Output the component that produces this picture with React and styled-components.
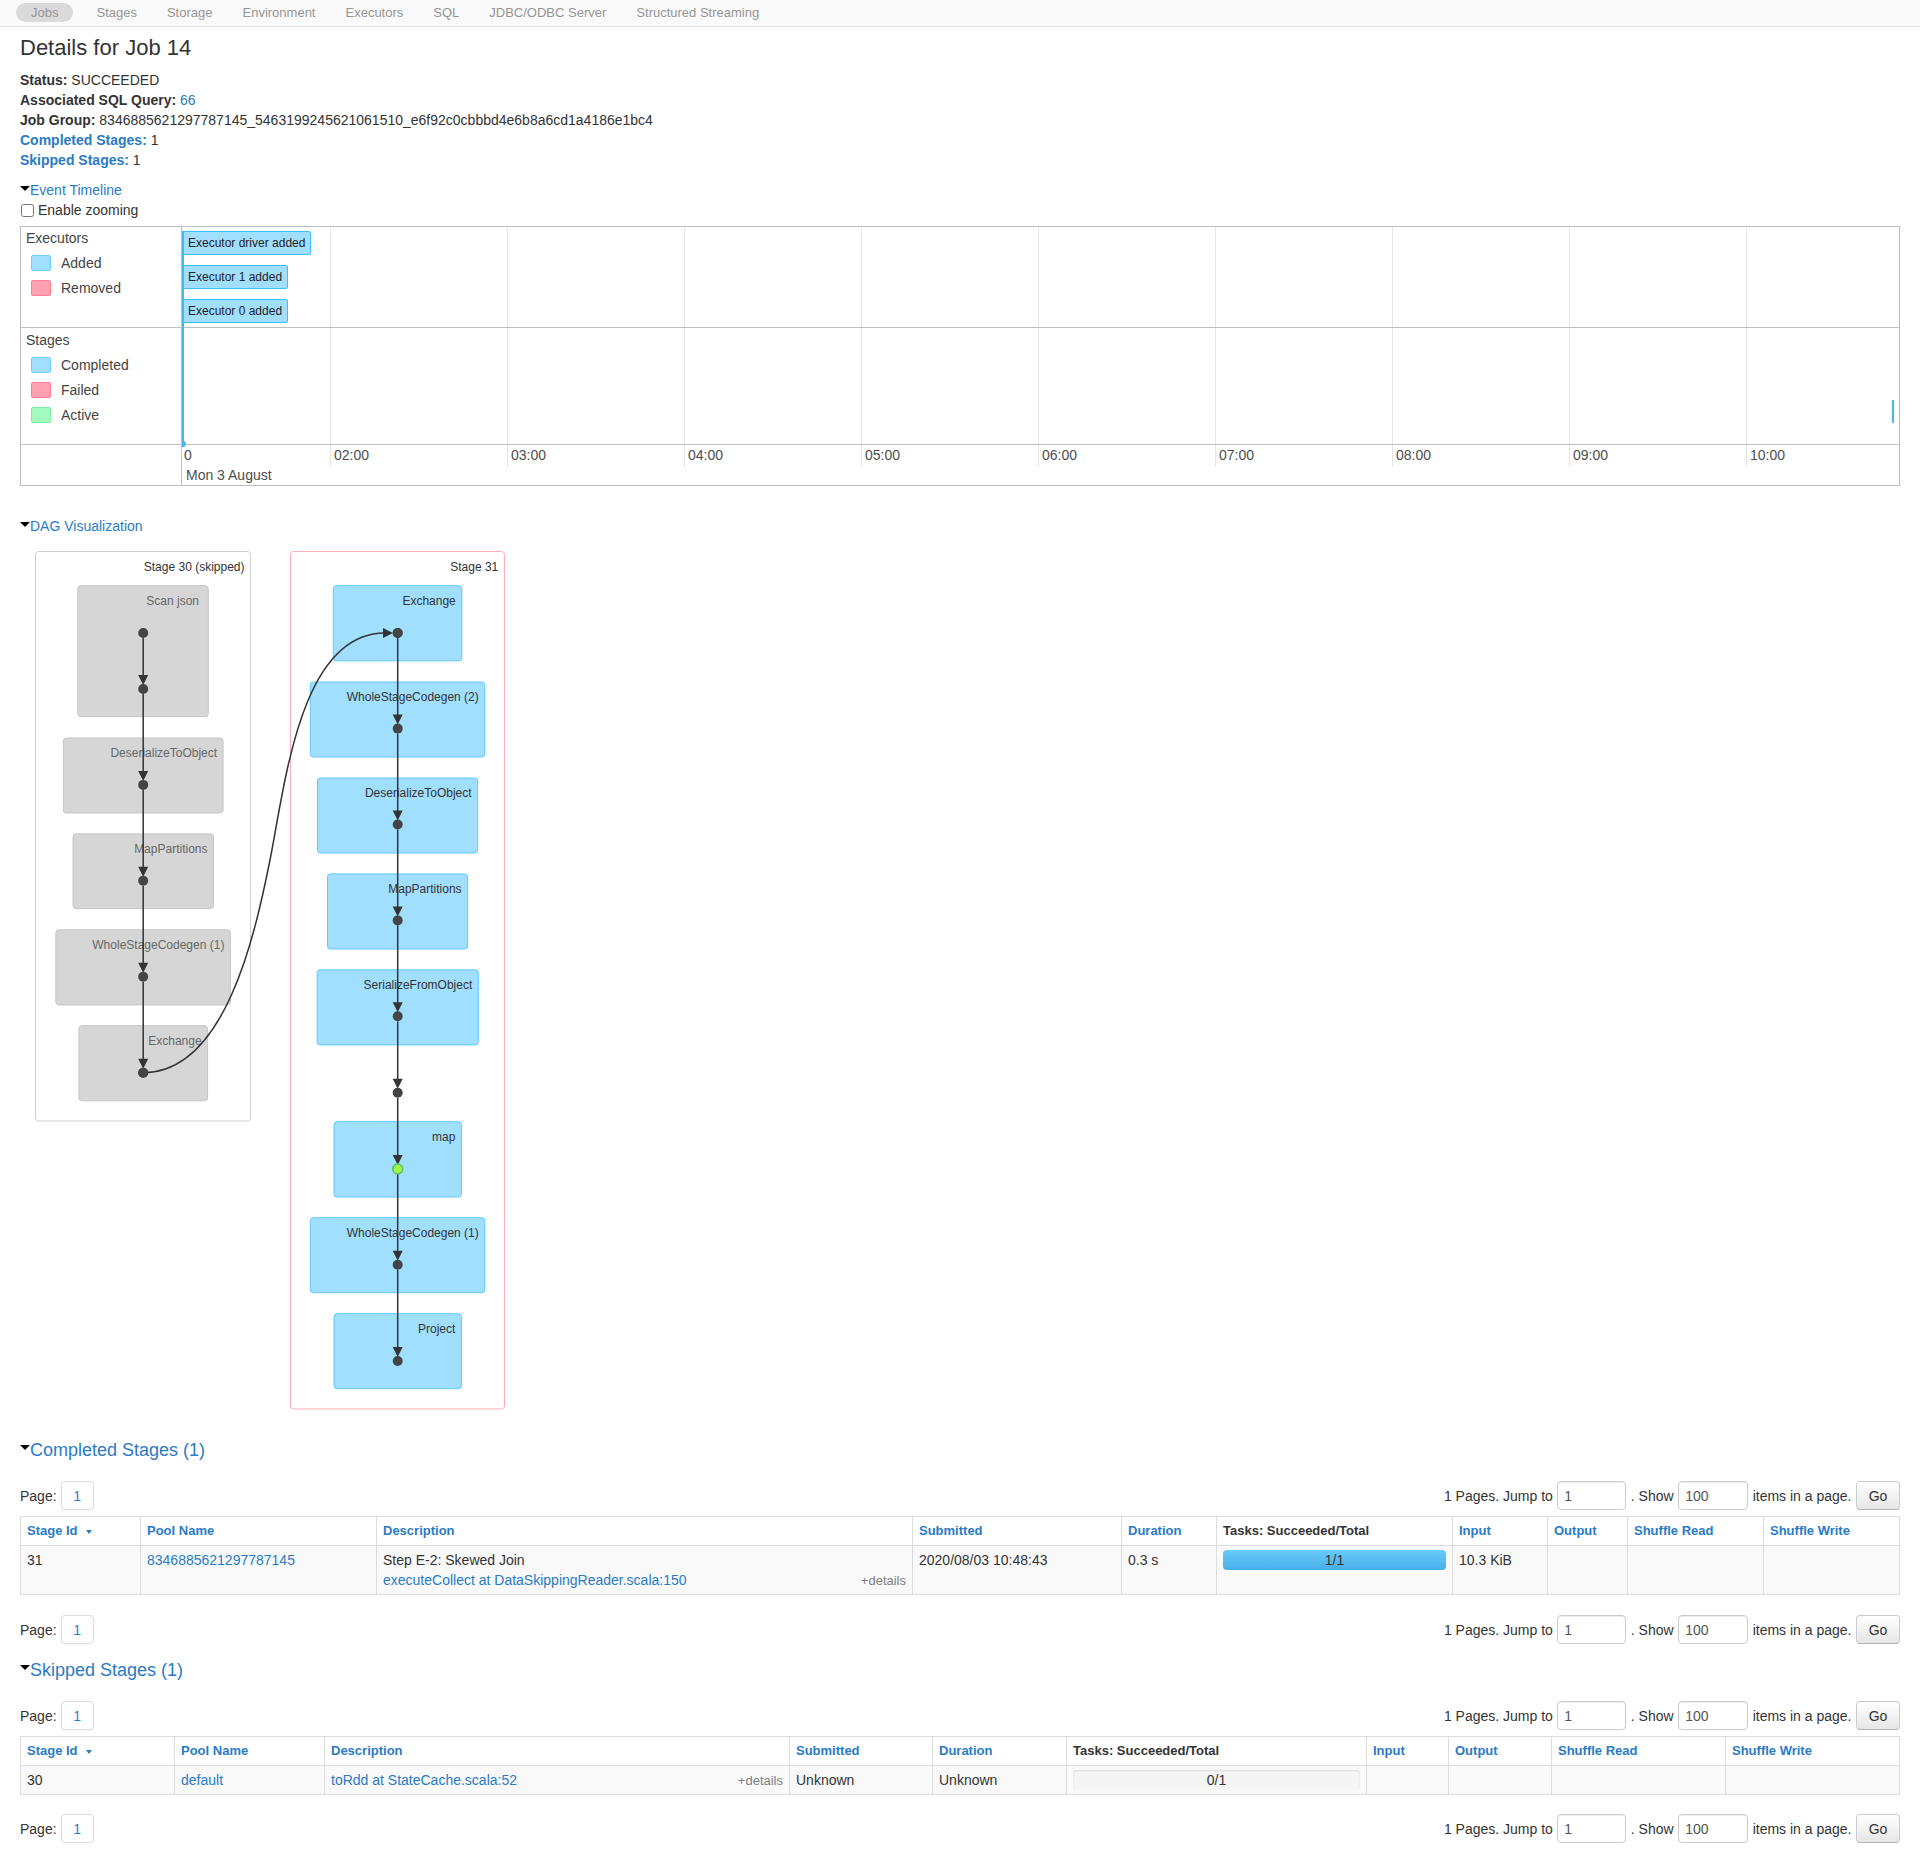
import React from 'react';
import styled, { createGlobalStyle } from 'styled-components';

const LINK = '#2a7bc6';
const TEXT = '#333';

const GlobalStyle = createGlobalStyle`
  html, body { margin: 0; padding: 0; background: #fff; }
  body {
    font-family: "Liberation Sans", Arial, Helvetica, sans-serif;
    font-size: 14px;
    line-height: 20px;
    color: ${TEXT};
  }
  * { box-sizing: border-box; }
`;

/* ---------- nav ---------- */
const NavBar = styled.nav`
  height: 27px;
  border-bottom: 1px solid #e5e5e5;
  background: #fafafa;
  display: flex;
  align-items: center;
  padding-left: 16px;
`;
const NavItem = styled.a`
  font-size: 13px;
  color: #959595;
  height: 19px;
  line-height: 19px;
  margin-bottom: 2px;
  padding: 0 15px;
  border-radius: 10px;
  background: ${p => (p.$active ? '#dadada' : 'transparent')};
  margin-right: ${p => (p.$active ? '8px' : '0')};
  white-space: nowrap;
`;

/* ---------- page ---------- */
const Content = styled.main`
  padding: 0 20px;
`;
const Title = styled.h3`
  margin: 6px 0 0;
  font-size: 22px;
  font-weight: normal;
  line-height: 30px;
  color: ${TEXT};
`;
const Summary = styled.ul`
  list-style: none;
  margin: 7px 0 0;
  padding: 0;
  li { line-height: 20px; }
`;
const Strong = styled.strong`
  font-weight: bold;
  color: ${p => (p.$link ? LINK : TEXT)};
`;
const Link = styled.a`
  color: ${LINK};
  text-decoration: none;
`;
const Toggle = styled.div`
  display: flex;
  align-items: center;
  color: ${LINK};
  font-size: ${p => p.$size}px;
  line-height: ${p => p.$lh}px;
  margin-top: ${p => p.$mt}px;
`;
const Caret = styled.span`
  display: inline-block;
  width: 0;
  height: 0;
  border-left: 5px solid transparent;
  border-right: 5px solid transparent;
  border-top: 5px solid #000;
  margin-bottom: ${p => p.$mb}px;
`;
const CheckRow = styled.label`
  display: flex;
  align-items: center;
  line-height: 20px;
  input { margin: 0 4px 0 1px; width: 13px; height: 13px; }
`;

/* ---------- timeline ---------- */
const Timeline = styled.div`
  margin-top: 6px;
  border: 1px solid #bfbfbf;
  display: grid;
  grid-template-columns: 161px 1fr;
`;
const LegendCol = styled.div`
  border-right: 1px solid #bfbfbf;
  display: flex;
  flex-direction: column;
`;
const LegendGroup = styled.div`
  height: ${p => p.$h}px;
  border-bottom: ${p => (p.$border ? '1px solid #bfbfbf' : 'none')};
  padding: ${p => p.$pt}px 0 0 5px;
  color: #444;
`;
const LegendTitle = styled.div`
  line-height: 20px;
  margin-bottom: 2px;
`;
const LegendItem = styled.div`
  display: flex;
  align-items: center;
  height: 25px;
`;
const Swatch = styled.span`
  width: 20px;
  height: 16px;
  margin: 0 10px 0 5px;
  border-radius: 2px;
  border: 1px solid ${p => p.$stroke};
  background: ${p => p.$fill};
`;
const Chart = styled.div`
  position: relative;
  display: flex;
  flex-direction: column;
  overflow: hidden;
`;
const Band = styled.div`
  position: relative;
  z-index: 1;
  height: ${p => p.$h}px;
  border-bottom: ${p => (p.$border ? '1px solid #bfbfbf' : 'none')};
`;
const GridLine = styled.div`
  position: absolute;
  top: 0;
  width: 1px;
  height: 240px;
  background: #e5e5e5;
`;
const AxisLabel = styled.div`
  position: absolute;
  font-size: 14px;
  line-height: 18px;
  color: #4d4d4d;
  white-space: nowrap;
`;
const EventItem = styled.div`
  position: absolute;
  z-index: 2;
  left: 0;
  height: 24px;
  padding: 0 5px;
  font-size: 12px;
  line-height: 22px;
  color: #222;
  white-space: nowrap;
  background: #a0dfff;
  border: 1px solid #3ec0ff;
  border-radius: 2px;
`;
const Bar = styled.div`
  position: absolute;
  z-index: 3;
  width: 2px;
  background: #46b8ee;
`;
const BarDot = styled.div`
  position: absolute;
  z-index: 3;
  width: 6px;
  height: 6px;
  border-radius: 50%;
  background: #46b8ee;
`;

/* ---------- dag ---------- */
const DagSvg = styled.svg`
  display: block;
  margin-top: 4px;
  font-family: "Liberation Sans", Arial, Helvetica, sans-serif;
  font-size: 12px;
`;

/* ---------- sections / tables ---------- */
const SectionTitle = styled(Toggle)``;
const PageRow = styled.div`
  display: flex;
  justify-content: space-between;
  align-items: center;
  height: 29px;
  margin-top: ${p => p.$mt}px;
`;
const PageLeft = styled.div`
  display: flex;
  align-items: center;
  gap: 4px;
`;
const PageBox = styled.span`
  display: inline-flex;
  align-items: center;
  justify-content: center;
  width: 33px;
  height: 29px;
  border: 1px solid #ddd;
  border-radius: 4px;
  color: ${LINK};
  box-shadow: 0 1px 2px rgba(0, 0, 0, 0.05);
`;
const PageRight = styled.div`
  display: flex;
  align-items: center;
  gap: 4.5px;
  white-space: nowrap;
`;
const PageInput = styled.input`
  width: ${p => p.$w}px;
  height: 29px;
  padding: 0 6px;
  border: 1px solid #ccc;
  border-radius: 4px;
  font: 14px "Liberation Sans", Arial, sans-serif;
  color: #555;
  box-shadow: inset 0 1px 1px rgba(0, 0, 0, 0.075);
`;
const GoButton = styled.button`
  width: 44px;
  height: 29px;
  border: 1px solid #ccc;
  border-bottom-color: #b3b3b3;
  border-radius: 4px;
  background: linear-gradient(#ffffff, #e6e6e6);
  font: 14px "Liberation Sans", Arial, sans-serif;
  color: #333;
  padding: 0;
`;
const Table = styled.table`
  width: 100%;
  margin-top: 6px;
  border-collapse: collapse;
  table-layout: fixed;
  border: 1px solid #ddd;
`;
const Col = styled.col`
  width: ${p => p.$w}px;
`;
const Th = styled.th`
  text-align: left;
  font-size: 13px;
  font-weight: bold;
  padding: 4px 6px;
  line-height: 20px;
  border: 1px solid #ddd;
  color: ${p => (p.$plain ? TEXT : LINK)};
  background: #fff;
  white-space: nowrap;
`;
const Td = styled.td`
  vertical-align: top;
  padding: 4px 6px 3px;
  line-height: 20px;
  border: 1px solid #ddd;
  background: #f9f9f9;
  white-space: nowrap;
`;
const SortArrow = styled.span`
  display: inline-block;
  width: 0;
  height: 0;
  margin-left: 8px;
  vertical-align: middle;
  border-left: 3px solid transparent;
  border-right: 3px solid transparent;
  border-top: 4px solid ${LINK};
`;
const DescLine = styled.div`
  display: flex;
  justify-content: space-between;
  align-items: baseline;
`;
const Details = styled.span`
  font-size: 13px;
  color: #808080;
`;
const Progress = styled.div`
  position: relative;
  height: 20px;
  border-radius: 4px;
  background: #f5f5f5;
  box-shadow: inset 0 1px 2px rgba(0, 0, 0, 0.1);
  overflow: hidden;
`;
const ProgressFill = styled.div`
  position: absolute;
  left: 0;
  top: 0;
  bottom: 0;
  background: linear-gradient(#6acbfa, #48aee9);
`;
const ProgressText = styled.span`
  position: relative;
  display: block;
  text-align: center;
  line-height: 20px;
  color: #333;
`;

/* ---------- data ---------- */
const navItems = ['Jobs', 'Stages', 'Storage', 'Environment', 'Executors', 'SQL', 'JDBC/ODBC Server', 'Structured Streaming'];
const ticks = ['02:00', '03:00', '04:00', '05:00', '06:00', '07:00', '08:00', '09:00', '10:00'];
const executorEvents = [
  { label: 'Executor driver added', top: 4 },
  { label: 'Executor 1 added', top: 38 },
  { label: 'Executor 0 added', top: 72 },
];

const stage30 = {
  nodes: [
    { label: 'Scan json', x1: 77.8, x2: 208.3, y1: 585.7, y2: 716.7, lx: 199 },
    { label: 'DeserializeToObject', x1: 63.4, x2: 223.1, y1: 738, y2: 813 },
    { label: 'MapPartitions', x1: 73, x2: 213.5, y1: 833.9, y2: 908.6 },
    { label: 'WholeStageCodegen (1)', x1: 55.8, x2: 230.4, y1: 929.8, y2: 1004.9 },
    { label: 'Exchange', x1: 78.9, x2: 207.6, y1: 1025.7, y2: 1100.8 },
  ],
  cx: 143.2,
  dots: [633, 689, 784.9, 880.8, 976.7, 1072.7],
};
const stage31 = {
  nodes: [
    { label: 'Exchange', x1: 333.3, x2: 461.8, y1: 585.7, y2: 660.8 },
    { label: 'WholeStageCodegen (2)', x1: 310.3, x2: 484.8, y1: 682, y2: 757 },
    { label: 'DeserializeToObject', x1: 317.5, x2: 477.6, y1: 778, y2: 853 },
    { label: 'MapPartitions', x1: 327.5, x2: 467.6, y1: 873.9, y2: 949 },
    { label: 'SerializeFromObject', x1: 317.1, x2: 478.3, y1: 969.8, y2: 1044.9 },
    { label: 'map', x1: 334, x2: 461.4, y1: 1121.7, y2: 1197 },
    { label: 'WholeStageCodegen (1)', x1: 310.3, x2: 484.8, y1: 1217.7, y2: 1292.7 },
    { label: 'Project', x1: 334, x2: 461.4, y1: 1313.7, y2: 1388.7 },
  ],
  cx: 397.7,
  dots: [633, 728.6, 824.5, 920.4, 1016.3, 1092.7, 1169, 1264.7, 1361],
  cached: 1169,
};

const completedCols = [
  { title: 'Stage Id', w: 120, sort: true },
  { title: 'Pool Name', w: 236 },
  { title: 'Description', w: 536 },
  { title: 'Submitted', w: 209 },
  { title: 'Duration', w: 95 },
  { title: 'Tasks: Succeeded/Total', w: 236, plain: true },
  { title: 'Input', w: 95 },
  { title: 'Output', w: 80 },
  { title: 'Shuffle Read', w: 136 },
  { title: 'Shuffle Write', w: 136 },
];
const skippedCols = [
  { title: 'Stage Id', w: 154, sort: true },
  { title: 'Pool Name', w: 150 },
  { title: 'Description', w: 465 },
  { title: 'Submitted', w: 143 },
  { title: 'Duration', w: 134 },
  { title: 'Tasks: Succeeded/Total', w: 300, plain: true },
  { title: 'Input', w: 82 },
  { title: 'Output', w: 103 },
  { title: 'Shuffle Read', w: 174 },
  { title: 'Shuffle Write', w: 174 },
];

/* ---------- components ---------- */
function StageCluster({ stage, skipped }) {
  const { nodes, cx, dots, cached } = stage;
  const fill = skipped ? '#d6d6d6' : '#a0dfff';
  const stroke = skipped ? '#c6c6c6' : '#62c9ff';
  const textColor = skipped ? '#666' : '#333';
  return (
    <g>
      {nodes.map(n => (
        <g key={n.label + n.y1}>
          <rect x={n.x1} y={n.y1} width={n.x2 - n.x1} height={n.y2 - n.y1} rx="3" fill={fill} stroke={stroke} strokeWidth="1" />
          <text x={n.lx || n.x2 - 6} y={n.y1 + 19} textAnchor="end" fill={textColor}>{n.label}</text>
        </g>
      ))}
      {dots.slice(1).map((y, i) => (
        <g key={'e' + y}>
          <line x1={cx} y1={dots[i] + 5} x2={cx} y2={y - 12} stroke="#333" strokeWidth="1.5" />
          <polygon points={`${cx - 5},${y - 14} ${cx + 5},${y - 14} ${cx},${y - 4}`} fill="#333" />
        </g>
      ))}
      {dots.map(y => (
        y === cached
          ? <circle key={'d' + y} cx={cx} cy={y} r="5" fill="#a3f545" stroke="#52c366" strokeWidth="1.5" />
          : <circle key={'d' + y} cx={cx} cy={y} r="5" fill="#444" />
      ))}
    </g>
  );
}

function DagViz() {
  return (
    <DagSvg width="500" height="880" viewBox="20 540 500 880">
      <rect x="35.5" y="551.5" width="215" height="569.5" rx="3" fill="#fff" stroke="#cfcfcf" />
      <text x="244.5" y="570.8" textAnchor="end" fill="#333">Stage 30 (skipped)</text>
      <rect x="290.5" y="551.5" width="214" height="857.5" rx="3" fill="#fff" stroke="#ffabba" />
      <text x="498.3" y="570.8" textAnchor="end" fill="#333">Stage 31</text>
      <StageCluster stage={stage30} skipped />
      <StageCluster stage={stage31} />
      <path d="M143.2,1072.7 C225,1072.7 255,935 270,860 C285,785 300,633 385,633" fill="none" stroke="#333" strokeWidth="1.5" />
      <polygon points="383,628 383,638 393,633" fill="#333" />
      <circle cx="143.2" cy="1072.7" r="5" fill="#444" />
      <circle cx="397.7" cy="633" r="5" fill="#444" />
    </DagSvg>
  );
}

function EventTimeline() {
  return (
    <Timeline>
      <LegendCol>
        <LegendGroup $h={101} $pt={1} $border>
          <LegendTitle>Executors</LegendTitle>
          <LegendItem><Swatch $fill="#a0dfff" $stroke="#6ccfff" />Added</LegendItem>
          <LegendItem><Swatch $fill="#ffa1b0" $stroke="#ff7d92" />Removed</LegendItem>
        </LegendGroup>
        <LegendGroup $h={117} $pt={2} $border>
          <LegendTitle>Stages</LegendTitle>
          <LegendItem><Swatch $fill="#a0dfff" $stroke="#6ccfff" />Completed</LegendItem>
          <LegendItem><Swatch $fill="#ffa1b0" $stroke="#ff7d92" />Failed</LegendItem>
          <LegendItem><Swatch $fill="#a2fcc0" $stroke="#7eeaa0" />Active</LegendItem>
        </LegendGroup>
        <LegendGroup $h={40} $pt={0} />
      </LegendCol>
      <Chart>
        <Band $h={101} $border />
        <Band $h={117} $border />
        <Band $h={40} />
        {ticks.map((t, i) => (
          <React.Fragment key={t}>
            <GridLine style={{ left: 148 + 177 * i }} />
            <AxisLabel style={{ left: 152 + 177 * i, top: 219 }}>{t}</AxisLabel>
          </React.Fragment>
        ))}
        <AxisLabel style={{ left: 2, top: 219 }}>0</AxisLabel>
        <AxisLabel style={{ left: 4, top: 239 }}>Mon 3 August</AxisLabel>
        {executorEvents.map(e => (
          <EventItem key={e.label} style={{ top: e.top }}>{e.label}</EventItem>
        ))}
        <Bar style={{ left: 0, top: 4, height: 215 }} />
        <BarDot style={{ left: -2, top: 214 }} />
        <Bar style={{ left: 1710, top: 173, height: 23 }} />
      </Chart>
    </Timeline>
  );
}

function Pagination({ mt }) {
  return (
    <PageRow $mt={mt}>
      <PageLeft>Page: <PageBox>1</PageBox></PageLeft>
      <PageRight>
        <span>1 Pages. Jump to</span>
        <PageInput $w={69} defaultValue="1" />
        <span>. Show</span>
        <PageInput $w={70} defaultValue="100" />
        <span>items in a page.</span>
        <GoButton>Go</GoButton>
      </PageRight>
    </PageRow>
  );
}

function StageTable({ cols, children }) {
  return (
    <Table>
      <colgroup>
        {cols.map(c => <Col key={c.title} $w={c.w} />)}
      </colgroup>
      <thead>
        <tr>
          {cols.map(c => (
            <Th key={c.title} $plain={c.plain}>
              {c.title}
              {c.sort && <SortArrow />}
            </Th>
          ))}
        </tr>
      </thead>
      <tbody>{children}</tbody>
    </Table>
  );
}

function TaskBar({ done, total }) {
  return (
    <Progress>
      <ProgressFill style={{ width: `${(done / total) * 100}%` }} />
      <ProgressText>{done}/{total}</ProgressText>
    </Progress>
  );
}

export default function App() {
  return (
    <>
      <GlobalStyle />
      <NavBar>
        {navItems.map((n, i) => (
          <NavItem key={n} $active={i === 0}>{n}</NavItem>
        ))}
      </NavBar>
      <Content>
        <Title>Details for Job 14</Title>
        <Summary>
          <li><Strong>Status:</Strong> SUCCEEDED</li>
          <li><Strong>Associated SQL Query:</Strong> <Link>66</Link></li>
          <li><Strong>Job Group:</Strong> 8346885621297787145_5463199245621061510_e6f92c0cbbbd4e6b8a6cd1a4186e1bc4</li>
          <li><Strong $link>Completed Stages:</Strong> 1</li>
          <li><Strong $link>Skipped Stages:</Strong> 1</li>
        </Summary>

        <Toggle $size={14} $lh={20} $mt={10}><Caret $mb={4} />Event Timeline</Toggle>
        <CheckRow><input type="checkbox" />Enable zooming</CheckRow>
        <EventTimeline />

        <Toggle $size={14} $lh={20} $mt={30}><Caret $mb={4} />DAG Visualization</Toggle>
        <DagViz />

        <SectionTitle $size={18} $lh={26} $mt={17}><Caret $mb={6} />Completed Stages (1)</SectionTitle>
        <Pagination mt={18} />
        <StageTable cols={completedCols}>
          <tr>
            <Td>31</Td>
            <Td><Link>8346885621297787145</Link></Td>
            <Td>
              <div>Step E-2: Skewed Join</div>
              <DescLine>
                <Link>executeCollect at DataSkippingReader.scala:150</Link>
                <Details>+details</Details>
              </DescLine>
            </Td>
            <Td>2020/08/03 10:48:43</Td>
            <Td>0.3 s</Td>
            <Td><TaskBar done={1} total={1} /></Td>
            <Td>10.3 KiB</Td>
            <Td />
            <Td />
            <Td />
          </tr>
        </StageTable>
        <Pagination mt={20} />

        <SectionTitle $size={18} $lh={26} $mt={13}><Caret $mb={6} />Skipped Stages (1)</SectionTitle>
        <Pagination mt={18} />
        <StageTable cols={skippedCols}>
          <tr>
            <Td>30</Td>
            <Td><Link>default</Link></Td>
            <Td>
              <DescLine>
                <Link>toRdd at StateCache.scala:52</Link>
                <Details>+details</Details>
              </DescLine>
            </Td>
            <Td>Unknown</Td>
            <Td>Unknown</Td>
            <Td><TaskBar done={0} total={1} /></Td>
            <Td />
            <Td />
            <Td />
            <Td />
          </tr>
        </StageTable>
        <Pagination mt={19} />
      </Content>
    </>
  );
}
